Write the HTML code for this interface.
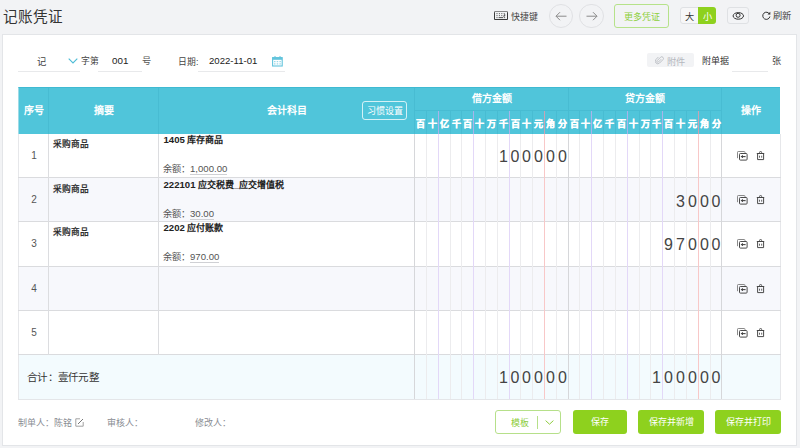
<!DOCTYPE html><html lang="zh-CN"><head><meta charset="utf-8"><style>
:root{--grid:#ececee;--pur:#e3d8f8;--red:#f8c8c8;--hgrid:#48bcd2;--cyan:#50c5da;--green:#8ed11e;}
*{box-sizing:border-box;margin:0;padding:0}
html,body{width:800px;height:448px;overflow:hidden;background:#f2f3f5;font-family:"Liberation Sans",sans-serif;color:#333}
.a{position:absolute;white-space:nowrap}
.card{position:absolute;left:2px;top:34px;width:795px;height:412px;background:#fff;border:1px solid #e3e5e8}
.vl{position:absolute;width:1px}
.hl{position:absolute;height:1px}
.hd{color:#fff;font-weight:bold;font-size:10px;line-height:12px;text-align:center}
.dg{color:#fff;font-weight:bold;font-size:9px;line-height:12px;text-align:center;-webkit-text-stroke:0.3px #fff}
.amt{position:absolute;font-size:16px;line-height:16px;color:#444;text-align:center;display:flex;justify-content:center}
.btn{position:absolute;top:410px;height:24px;border-radius:3px;background:var(--green);color:#fff;font-size:9px;line-height:25.5px;text-align:center}
</style></head><body>

<div class="a" style="left:3px;top:7.5px;font-size:14.6px;line-height:18px;color:#333">记账凭证</div>
<svg class="a" style="left:494px;top:11px" width="14" height="10" viewBox="0 0 14 10"><path d="M0.5 8.5V1.3A0.8 0.8 0 0 1 1.3 0.5H12.7A0.8 0.8 0 0 1 13.5 1.3V8.5Z" fill="none" stroke="#3a3a3a" stroke-width="1"/><path d="M1 0.5H13" stroke="#888" stroke-width="1"/><g fill="#555"><rect x="2.50" y="2.10" width="1" height="1"/><rect x="4.90" y="2.10" width="1" height="1"/><rect x="7.30" y="2.10" width="1" height="1"/><rect x="9.70" y="2.10" width="1" height="1"/><rect x="2.50" y="4.10" width="1" height="1"/><rect x="4.90" y="4.10" width="1" height="1"/><rect x="7.30" y="4.10" width="1" height="1"/><rect x="2.50" y="6.10" width="1" height="1"/><rect x="10.10" y="6.10" width="1" height="1"/><rect x="4.6" y="6.1" width="4.6" height="1"/></g><path d="M10.7 3.2V5.1H9.2" fill="none" stroke="#333" stroke-width="0.9"/></svg>
<div class="a" style="left:511px;top:10.5px;font-size:8.9px;line-height:12px;color:#444">快捷键</div>
<div class="a" style="left:548.5px;top:3.5px;width:24.5px;height:24.5px;border:1px solid #e0e1e4;border-radius:50%"></div>
<div class="a" style="left:579px;top:3.5px;width:24.5px;height:24.5px;border:1px solid #e0e1e4;border-radius:50%"></div>
<svg class="a" style="left:554px;top:10px" width="14" height="12" viewBox="0 0 14 12"><path d="M2 6.2H12.5M6 2.2L2 6.2L6 10.2" fill="none" stroke="#8a8a8a" stroke-width="1"/></svg>
<svg class="a" style="left:584.5px;top:10px" width="14" height="12" viewBox="0 0 14 12"><path d="M1.5 6.2H12M8 2.2L12 6.2L8 10.2" fill="none" stroke="#8a8a8a" stroke-width="1"/></svg>
<div class="a" style="left:614px;top:4px;width:55px;height:23.5px;border:1px solid #b6e28a;border-radius:3px;color:#8dcf3c;font-size:9px;line-height:25px;text-align:center">更多凭证</div>
<div class="a" style="left:680px;top:7px;width:36px;height:17px;border:1px solid #dfe1e4;border-radius:3px;background:#f7f7f8;"><div class="a" style="left:0;top:1.5px;width:17px;height:15px;font-size:9.2px;line-height:15px;text-align:center;color:#333">大</div></div>
<div class="a" style="left:698px;top:7px;width:18px;height:17px;background:var(--green);border-radius:0 3px 3px 0;font-size:9.2px;line-height:20px;text-align:center;color:#fff">小</div>
<div class="a" style="left:727px;top:7px;width:22px;height:17px;border:1px solid #dfe1e4;border-radius:3px;background:#f3f4f6"></div>
<svg class="a" style="left:731px;top:11px" width="15" height="10" viewBox="0 0 15 10"><ellipse cx="7.3" cy="4.9" rx="5.2" ry="3.3" fill="none" stroke="#2a2a2a" stroke-width="0.95"/><circle cx="7.1" cy="4.3" r="2" fill="none" stroke="#2a2a2a" stroke-width="0.95"/></svg>
<svg class="a" style="left:762px;top:11px" width="9" height="9" viewBox="0 0 9 9"><path d="M7.6 3.2A3.6 3.6 0 1 0 7.9 5.5" fill="none" stroke="#333" stroke-width="1"/><path d="M8.3 0.8V3.6H5.5Z" fill="#333"/></svg>
<div class="a" style="left:773px;top:10px;font-size:9.2px;line-height:12px;color:#444">刷新</div>
<div class="card"></div>
<div class="hl" style="left:18px;top:71px;width:62px;background:#e8e9eb"></div>
<div class="a" style="left:37px;top:56px;font-size:9.3px;line-height:12px;color:#444">记</div>
<svg class="a" style="left:68px;top:58px" width="10" height="6" viewBox="0 0 10 6"><path d="M0.7 0.7L5 5L9.3 0.7" fill="none" stroke="#4cbcd6" stroke-width="1.1"/></svg>
<div class="a" style="left:80.5px;top:55px;font-size:8.8px;line-height:12px;color:#444">字第</div>
<div class="hl" style="left:98px;top:71px;width:44px;background:#e8e9eb"></div>
<div class="a" style="left:112px;top:54.5px;font-size:9.8px;line-height:12px;color:#222">001</div>
<div class="a" style="left:142px;top:55px;font-size:9.2px;line-height:12px;color:#555">号</div>
<div class="a" style="left:178px;top:55.5px;font-size:8.8px;line-height:12px;color:#444">日期:</div>
<div class="hl" style="left:198px;top:71px;width:87px;background:#e8e9eb"></div>
<div class="a" style="left:209px;top:54.5px;font-size:9.6px;line-height:12px;color:#222">2022-11-01</div>
<svg class="a" style="left:272px;top:55.5px" width="11" height="11" viewBox="0 0 11 11"><rect x="0.6" y="1.6" width="9.6" height="8.4" fill="none" stroke="#62c4dc" stroke-width="1.1"/><rect x="0.6" y="1.6" width="9.6" height="2.2" fill="#62c4dc"/><path d="M3 0V2M8 0V2" stroke="#62c4dc" stroke-width="1"/><g fill="#9ad8e8"><rect x="2" y="5" width="1.5" height="1.2"/><rect x="4.7" y="5" width="1.5" height="1.2"/><rect x="7.4" y="5" width="1.5" height="1.2"/><rect x="2" y="7.3" width="1.5" height="1.2"/><rect x="4.7" y="7.3" width="1.5" height="1.2"/><rect x="7.4" y="7.3" width="1.5" height="1.2"/></g></svg>
<div class="a" style="left:647px;top:53px;width:47px;height:14px;background:#f2f3f5;border-radius:2px"></div>
<svg class="a" style="left:655px;top:55.5px" width="10" height="9" viewBox="0 0 10 9"><path d="M6.2 3.2L3.4 6A0.9 0.9 0 0 1 2.1 4.7L5.6 1.2A1.7 1.7 0 0 1 8 3.6L4.6 7A2.5 2.5 0 0 1 1 3.4L3.4 1" fill="none" stroke="#b9bcc2" stroke-width="0.9"/></svg>
<div class="a" style="left:667px;top:55.5px;font-size:9.2px;line-height:12px;color:#b5b8be">附件</div>
<div class="a" style="left:701.5px;top:55px;font-size:9px;line-height:12px;color:#333">附单据</div>
<div class="hl" style="left:732px;top:71px;width:36px;background:#e8e9eb"></div>
<div class="a" style="left:772px;top:55px;font-size:9.2px;line-height:12px;color:#444">张</div>
<div class="a" style="left:18px;top:87px;width:762px;height:47px;background:var(--cyan);border-top:1px solid #3fbad2;border-left:1px solid #9ddbe7"></div>
<div class="a" style="left:18px;top:134px;width:763px;height:266px;background:#fff;border-left:1px solid #e6e7ea;border-right:1px solid #e6e7ea"></div>
<div class="hl" style="left:18px;top:177px;width:763px;background:#dadbde"></div>
<div class="a" style="left:19px;top:178px;width:761px;height:43px;background:#f7f8fc"></div>
<div class="hl" style="left:18px;top:221px;width:763px;background:#dadbde"></div>
<div class="hl" style="left:18px;top:266px;width:763px;background:#dadbde"></div>
<div class="a" style="left:19px;top:267px;width:761px;height:43px;background:#f7f8fc"></div>
<div class="hl" style="left:18px;top:310px;width:763px;background:#dadbde"></div>
<div class="hl" style="left:18px;top:354px;width:763px;background:#dadbde"></div>
<div class="a" style="left:19px;top:355px;width:761px;height:44px;background:#f3fbfe"></div>
<div class="hl" style="left:18px;top:399px;width:763px;background:#e4e6e9"></div>
<div class="vl" style="left:48px;top:88px;height:46px;background:var(--hgrid)"></div>
<div class="vl" style="left:158px;top:88px;height:46px;background:var(--hgrid)"></div>
<div class="vl" style="left:414px;top:88px;height:46px;background:var(--hgrid)"></div>
<div class="vl" style="left:568px;top:88px;height:46px;background:var(--hgrid)"></div>
<div class="vl" style="left:721px;top:88px;height:46px;background:var(--hgrid)"></div>
<div class="hl" style="left:414px;top:110px;width:307px;background:var(--hgrid)"></div>
<div class="vl" style="left:426px;top:111px;height:23px;background:var(--hgrid)"></div>
<div class="vl" style="left:579px;top:111px;height:23px;background:var(--hgrid)"></div>
<div class="vl" style="left:438px;top:111px;height:23px;background:#a9b3ea"></div>
<div class="vl" style="left:591px;top:111px;height:23px;background:#a9b3ea"></div>
<div class="vl" style="left:450px;top:111px;height:23px;background:var(--hgrid)"></div>
<div class="vl" style="left:603px;top:111px;height:23px;background:var(--hgrid)"></div>
<div class="vl" style="left:461px;top:111px;height:23px;background:var(--hgrid)"></div>
<div class="vl" style="left:615px;top:111px;height:23px;background:var(--hgrid)"></div>
<div class="vl" style="left:473px;top:111px;height:23px;background:#a9b3ea"></div>
<div class="vl" style="left:627px;top:111px;height:23px;background:#a9b3ea"></div>
<div class="vl" style="left:485px;top:111px;height:23px;background:var(--hgrid)"></div>
<div class="vl" style="left:639px;top:111px;height:23px;background:var(--hgrid)"></div>
<div class="vl" style="left:497px;top:111px;height:23px;background:var(--hgrid)"></div>
<div class="vl" style="left:650px;top:111px;height:23px;background:var(--hgrid)"></div>
<div class="vl" style="left:509px;top:111px;height:23px;background:#a9b3ea"></div>
<div class="vl" style="left:662px;top:111px;height:23px;background:#a9b3ea"></div>
<div class="vl" style="left:520px;top:111px;height:23px;background:var(--hgrid)"></div>
<div class="vl" style="left:674px;top:111px;height:23px;background:var(--hgrid)"></div>
<div class="vl" style="left:532px;top:111px;height:23px;background:var(--hgrid)"></div>
<div class="vl" style="left:686px;top:111px;height:23px;background:var(--hgrid)"></div>
<div class="vl" style="left:544px;top:111px;height:23px;background:#c9a3b4"></div>
<div class="vl" style="left:698px;top:111px;height:23px;background:#c9a3b4"></div>
<div class="vl" style="left:556px;top:111px;height:23px;background:var(--hgrid)"></div>
<div class="vl" style="left:710px;top:111px;height:23px;background:var(--hgrid)"></div>
<div class="a hd" style="left:18px;top:104.5px;width:31px">序号</div>
<div class="a hd" style="left:48px;top:104.5px;width:111px">摘要</div>
<div class="a hd" style="left:158px;top:104.5px;width:257px">会计科目</div>
<div class="a hd" style="left:414px;top:93px;width:155px">借方金额</div>
<div class="a hd" style="left:568px;top:93px;width:154px">贷方金额</div>
<div class="a hd" style="left:721px;top:105px;width:59px">操作</div>
<div class="a" style="left:362px;top:101px;width:45px;height:19px;border:1px solid rgba(255,255,255,0.75);border-radius:3px;color:#fff;font-size:9px;line-height:19px;text-align:center">习惯设置</div>
<div class="a dg" style="left:414.50px;top:117.5px;width:12.00px">百</div>
<div class="a dg" style="left:568.50px;top:117.5px;width:11.00px">百</div>
<div class="a dg" style="left:426.50px;top:117.5px;width:12.00px">十</div>
<div class="a dg" style="left:579.50px;top:117.5px;width:12.00px">十</div>
<div class="a dg" style="left:438.50px;top:117.5px;width:12.00px">亿</div>
<div class="a dg" style="left:591.50px;top:117.5px;width:12.00px">亿</div>
<div class="a dg" style="left:450.50px;top:117.5px;width:11.00px">千</div>
<div class="a dg" style="left:603.50px;top:117.5px;width:12.00px">千</div>
<div class="a dg" style="left:461.50px;top:117.5px;width:12.00px">百</div>
<div class="a dg" style="left:615.50px;top:117.5px;width:12.00px">百</div>
<div class="a dg" style="left:473.50px;top:117.5px;width:12.00px">十</div>
<div class="a dg" style="left:627.50px;top:117.5px;width:12.00px">十</div>
<div class="a dg" style="left:485.50px;top:117.5px;width:12.00px">万</div>
<div class="a dg" style="left:639.50px;top:117.5px;width:11.00px">万</div>
<div class="a dg" style="left:497.50px;top:117.5px;width:12.00px">千</div>
<div class="a dg" style="left:650.50px;top:117.5px;width:12.00px">千</div>
<div class="a dg" style="left:509.50px;top:117.5px;width:11.00px">百</div>
<div class="a dg" style="left:662.50px;top:117.5px;width:12.00px">百</div>
<div class="a dg" style="left:520.50px;top:117.5px;width:12.00px">十</div>
<div class="a dg" style="left:674.50px;top:117.5px;width:12.00px">十</div>
<div class="a dg" style="left:532.50px;top:117.5px;width:12.00px">元</div>
<div class="a dg" style="left:686.50px;top:117.5px;width:12.00px">元</div>
<div class="a dg" style="left:544.50px;top:117.5px;width:12.00px">角</div>
<div class="a dg" style="left:698.50px;top:117.5px;width:12.00px">角</div>
<div class="a dg" style="left:556.50px;top:117.5px;width:12.00px">分</div>
<div class="a dg" style="left:710.50px;top:117.5px;width:11.00px">分</div>
<div class="vl" style="left:48px;top:134px;height:221px;background:#dcdde0"></div>
<div class="vl" style="left:158px;top:134px;height:221px;background:#dcdde0"></div>
<div class="vl" style="left:414px;top:134px;height:265px;background:#d6d7da"></div>
<div class="vl" style="left:568px;top:134px;height:265px;background:#d6d7da"></div>
<div class="vl" style="left:721px;top:134px;height:265px;background:#d6d7da"></div>
<div class="vl" style="left:426px;top:134px;height:265px;background:var(--grid)"></div>
<div class="vl" style="left:579px;top:134px;height:265px;background:var(--grid)"></div>
<div class="vl" style="left:438px;top:134px;height:265px;background:var(--pur)"></div>
<div class="vl" style="left:591px;top:134px;height:265px;background:var(--pur)"></div>
<div class="vl" style="left:450px;top:134px;height:265px;background:var(--grid)"></div>
<div class="vl" style="left:603px;top:134px;height:265px;background:var(--grid)"></div>
<div class="vl" style="left:461px;top:134px;height:265px;background:var(--grid)"></div>
<div class="vl" style="left:615px;top:134px;height:265px;background:var(--grid)"></div>
<div class="vl" style="left:473px;top:134px;height:265px;background:var(--pur)"></div>
<div class="vl" style="left:627px;top:134px;height:265px;background:var(--pur)"></div>
<div class="vl" style="left:485px;top:134px;height:265px;background:var(--grid)"></div>
<div class="vl" style="left:639px;top:134px;height:265px;background:var(--grid)"></div>
<div class="vl" style="left:497px;top:134px;height:265px;background:var(--grid)"></div>
<div class="vl" style="left:650px;top:134px;height:265px;background:var(--grid)"></div>
<div class="vl" style="left:509px;top:134px;height:265px;background:var(--pur)"></div>
<div class="vl" style="left:662px;top:134px;height:265px;background:var(--pur)"></div>
<div class="vl" style="left:520px;top:134px;height:265px;background:var(--grid)"></div>
<div class="vl" style="left:674px;top:134px;height:265px;background:var(--grid)"></div>
<div class="vl" style="left:532px;top:134px;height:265px;background:var(--grid)"></div>
<div class="vl" style="left:686px;top:134px;height:265px;background:var(--grid)"></div>
<div class="vl" style="left:544px;top:134px;height:265px;background:var(--red)"></div>
<div class="vl" style="left:698px;top:134px;height:265px;background:var(--red)"></div>
<div class="vl" style="left:556px;top:134px;height:265px;background:var(--grid)"></div>
<div class="vl" style="left:710px;top:134px;height:265px;background:var(--grid)"></div>
<div class="a" style="left:19.5px;top:149.5px;width:29px;text-align:center;font-size:10px;line-height:12px;color:#555">1</div>
<div class="a" style="left:53px;top:137.8px;font-size:8.7px;line-height:12px;color:#222;-webkit-text-stroke:0.25px #222">采购商品</div>
<div class="a" style="left:163.5px;top:134.3px;font-size:9px;line-height:12px;color:#222;font-weight:bold"><span style="font-size:9.6px">1405</span> 库存商品</div>
<div class="a" style="left:163px;top:163px;font-size:9.2px;line-height:12px;color:#555">余额：<span style="color:#555;font-size:9.6px;border-bottom:1px solid #cfd0d4;padding-bottom:0px">1,000.00</span></div>
<div class="amt" style="left:497.50px;top:149px;width:12.00px">1</div>
<div class="amt" style="left:509.50px;top:149px;width:11.00px">0</div>
<div class="amt" style="left:520.50px;top:149px;width:12.00px">0</div>
<div class="amt" style="left:532.50px;top:149px;width:12.00px">0</div>
<div class="amt" style="left:544.50px;top:149px;width:12.00px">0</div>
<div class="amt" style="left:556.50px;top:149px;width:12.00px">0</div>
<svg class="a" style="left:737px;top:151px" width="11" height="10" viewBox="0 0 11 10"><path d="M0.5 7.2V1.2A0.7 0.7 0 0 1 1.2 0.5H7.3A0.7 0.7 0 0 1 8 1.2V2" fill="none" stroke="#8a8a8a" stroke-width="1"/><rect x="2.5" y="2.5" width="7.6" height="6.6" rx="0.9" fill="none" stroke="#4a4a4a" stroke-width="1"/><path d="M3.9 5.6H8.6" stroke="#444" stroke-width="1.1"/><path d="M5.4 4.2V7" stroke="#444" stroke-width="1"/></svg>
<svg class="a" style="left:756px;top:151px" width="9" height="10" viewBox="0 0 9 10"><path d="M3.6 2.3V1.4A1 1 0 0 1 5.6 1.4V2.3" fill="none" stroke="#555" stroke-width="1"/><path d="M0.8 2.5H8.2" stroke="#444" stroke-width="1"/><path d="M1.6 2.5V8.6H7.6V2.5" fill="none" stroke="#4a4a4a" stroke-width="1"/><path d="M3.5 4.7V6.7M5.7 4.7V6.7" stroke="#555" stroke-width="0.9"/></svg>
<div class="a" style="left:19.5px;top:194.3px;width:29px;text-align:center;font-size:10px;line-height:12px;color:#555">2</div>
<div class="a" style="left:53px;top:182.60000000000002px;font-size:8.7px;line-height:12px;color:#222;-webkit-text-stroke:0.25px #222">采购商品</div>
<div class="a" style="left:163.5px;top:179.10000000000002px;font-size:9px;line-height:12px;color:#222;font-weight:bold"><span style="font-size:9.6px">222101</span> 应交税费_应交增值税</div>
<div class="a" style="left:163px;top:207.8px;font-size:9.2px;line-height:12px;color:#555">余额：<span style="color:#555;font-size:9.6px;border-bottom:1px solid #cfd0d4;padding-bottom:0px">30.00</span></div>
<div class="amt" style="left:674.50px;top:193.8px;width:12.00px">3</div>
<div class="amt" style="left:686.50px;top:193.8px;width:12.00px">0</div>
<div class="amt" style="left:698.50px;top:193.8px;width:12.00px">0</div>
<div class="amt" style="left:710.50px;top:193.8px;width:11.00px">0</div>
<svg class="a" style="left:737px;top:195px" width="11" height="10" viewBox="0 0 11 10"><path d="M0.5 7.2V1.2A0.7 0.7 0 0 1 1.2 0.5H7.3A0.7 0.7 0 0 1 8 1.2V2" fill="none" stroke="#8a8a8a" stroke-width="1"/><rect x="2.5" y="2.5" width="7.6" height="6.6" rx="0.9" fill="none" stroke="#4a4a4a" stroke-width="1"/><path d="M3.9 5.6H8.6" stroke="#444" stroke-width="1.1"/><path d="M5.4 4.2V7" stroke="#444" stroke-width="1"/></svg>
<svg class="a" style="left:756px;top:195px" width="9" height="10" viewBox="0 0 9 10"><path d="M3.6 2.3V1.4A1 1 0 0 1 5.6 1.4V2.3" fill="none" stroke="#555" stroke-width="1"/><path d="M0.8 2.5H8.2" stroke="#444" stroke-width="1"/><path d="M1.6 2.5V8.6H7.6V2.5" fill="none" stroke="#4a4a4a" stroke-width="1"/><path d="M3.5 4.7V6.7M5.7 4.7V6.7" stroke="#555" stroke-width="0.9"/></svg>
<div class="a" style="left:19.5px;top:237.5px;width:29px;text-align:center;font-size:10px;line-height:12px;color:#555">3</div>
<div class="a" style="left:53px;top:225.8px;font-size:8.7px;line-height:12px;color:#222;-webkit-text-stroke:0.25px #222">采购商品</div>
<div class="a" style="left:163.5px;top:222.3px;font-size:9px;line-height:12px;color:#222;font-weight:bold"><span style="font-size:9.6px">2202</span> 应付账款</div>
<div class="a" style="left:163px;top:251px;font-size:9.2px;line-height:12px;color:#555">余额：<span style="color:#555;font-size:9.6px;border-bottom:1px solid #cfd0d4;padding-bottom:0px">970.00</span></div>
<div class="amt" style="left:662.50px;top:237px;width:12.00px">9</div>
<div class="amt" style="left:674.50px;top:237px;width:12.00px">7</div>
<div class="amt" style="left:686.50px;top:237px;width:12.00px">0</div>
<div class="amt" style="left:698.50px;top:237px;width:12.00px">0</div>
<div class="amt" style="left:710.50px;top:237px;width:11.00px">0</div>
<svg class="a" style="left:737px;top:239px" width="11" height="10" viewBox="0 0 11 10"><path d="M0.5 7.2V1.2A0.7 0.7 0 0 1 1.2 0.5H7.3A0.7 0.7 0 0 1 8 1.2V2" fill="none" stroke="#8a8a8a" stroke-width="1"/><rect x="2.5" y="2.5" width="7.6" height="6.6" rx="0.9" fill="none" stroke="#4a4a4a" stroke-width="1"/><path d="M3.9 5.6H8.6" stroke="#444" stroke-width="1.1"/><path d="M5.4 4.2V7" stroke="#444" stroke-width="1"/></svg>
<svg class="a" style="left:756px;top:239px" width="9" height="10" viewBox="0 0 9 10"><path d="M3.6 2.3V1.4A1 1 0 0 1 5.6 1.4V2.3" fill="none" stroke="#555" stroke-width="1"/><path d="M0.8 2.5H8.2" stroke="#444" stroke-width="1"/><path d="M1.6 2.5V8.6H7.6V2.5" fill="none" stroke="#4a4a4a" stroke-width="1"/><path d="M3.5 4.7V6.7M5.7 4.7V6.7" stroke="#555" stroke-width="0.9"/></svg>
<div class="a" style="left:19.5px;top:282.5px;width:29px;text-align:center;font-size:10px;line-height:12px;color:#555">4</div>
<svg class="a" style="left:737px;top:284px" width="11" height="10" viewBox="0 0 11 10"><path d="M0.5 7.2V1.2A0.7 0.7 0 0 1 1.2 0.5H7.3A0.7 0.7 0 0 1 8 1.2V2" fill="none" stroke="#8a8a8a" stroke-width="1"/><rect x="2.5" y="2.5" width="7.6" height="6.6" rx="0.9" fill="none" stroke="#4a4a4a" stroke-width="1"/><path d="M3.9 5.6H8.6" stroke="#444" stroke-width="1.1"/><path d="M5.4 4.2V7" stroke="#444" stroke-width="1"/></svg>
<svg class="a" style="left:756px;top:284px" width="9" height="10" viewBox="0 0 9 10"><path d="M3.6 2.3V1.4A1 1 0 0 1 5.6 1.4V2.3" fill="none" stroke="#555" stroke-width="1"/><path d="M0.8 2.5H8.2" stroke="#444" stroke-width="1"/><path d="M1.6 2.5V8.6H7.6V2.5" fill="none" stroke="#4a4a4a" stroke-width="1"/><path d="M3.5 4.7V6.7M5.7 4.7V6.7" stroke="#555" stroke-width="0.9"/></svg>
<div class="a" style="left:19.5px;top:326.5px;width:29px;text-align:center;font-size:10px;line-height:12px;color:#555">5</div>
<svg class="a" style="left:737px;top:328px" width="11" height="10" viewBox="0 0 11 10"><path d="M0.5 7.2V1.2A0.7 0.7 0 0 1 1.2 0.5H7.3A0.7 0.7 0 0 1 8 1.2V2" fill="none" stroke="#8a8a8a" stroke-width="1"/><rect x="2.5" y="2.5" width="7.6" height="6.6" rx="0.9" fill="none" stroke="#4a4a4a" stroke-width="1"/><path d="M3.9 5.6H8.6" stroke="#444" stroke-width="1.1"/><path d="M5.4 4.2V7" stroke="#444" stroke-width="1"/></svg>
<svg class="a" style="left:756px;top:328px" width="9" height="10" viewBox="0 0 9 10"><path d="M3.6 2.3V1.4A1 1 0 0 1 5.6 1.4V2.3" fill="none" stroke="#555" stroke-width="1"/><path d="M0.8 2.5H8.2" stroke="#444" stroke-width="1"/><path d="M1.6 2.5V8.6H7.6V2.5" fill="none" stroke="#4a4a4a" stroke-width="1"/><path d="M3.5 4.7V6.7M5.7 4.7V6.7" stroke="#555" stroke-width="0.9"/></svg>
<div class="a" style="left:27px;top:371.3px;font-size:10.5px;letter-spacing:0.3px;line-height:13px;color:#333">合计：壹仟元整</div>
<div class="amt" style="left:497.50px;top:370px;width:12.00px">1</div>
<div class="amt" style="left:509.50px;top:370px;width:11.00px">0</div>
<div class="amt" style="left:520.50px;top:370px;width:12.00px">0</div>
<div class="amt" style="left:532.50px;top:370px;width:12.00px">0</div>
<div class="amt" style="left:544.50px;top:370px;width:12.00px">0</div>
<div class="amt" style="left:556.50px;top:370px;width:12.00px">0</div>
<div class="amt" style="left:650.50px;top:370px;width:12.00px">1</div>
<div class="amt" style="left:662.50px;top:370px;width:12.00px">0</div>
<div class="amt" style="left:674.50px;top:370px;width:12.00px">0</div>
<div class="amt" style="left:686.50px;top:370px;width:12.00px">0</div>
<div class="amt" style="left:698.50px;top:370px;width:12.00px">0</div>
<div class="amt" style="left:710.50px;top:370px;width:11.00px">0</div>
<div class="a" style="left:18px;top:417px;font-size:9px;line-height:12px;color:#8a8d93">制单人：陈铭</div>
<svg class="a" style="left:75px;top:418px" width="9" height="9" viewBox="0 0 9 9"><path d="M5 0.8H0.8V8.2H8.2V4" fill="none" stroke="#999" stroke-width="0.9"/><path d="M3 6L8 1" stroke="#777" stroke-width="1"/></svg>
<div class="a" style="left:107px;top:417px;font-size:9px;line-height:12px;color:#8a8d93">审核人：</div>
<div class="a" style="left:194.5px;top:417px;font-size:9px;line-height:12px;color:#8a8d93">修改人：</div>
<div class="a" style="left:495px;top:410px;width:66px;height:24px;border:1px solid #b6e08a;border-radius:3px;background:#fff"></div>
<div class="a" style="left:511px;top:417px;font-size:9px;line-height:12px;color:#8dcc3c">模板</div>
<div class="vl" style="left:537px;top:416px;height:13px;background:#b6e08a"></div>
<svg class="a" style="left:544.5px;top:419.5px" width="9" height="5" viewBox="0 0 9 5"><path d="M0.6 0.6L4.5 4.2L8.4 0.6" fill="none" stroke="#8dcc3c" stroke-width="1"/></svg>
<div class="btn" style="left:572.5px;width:54px">保存</div>
<div class="btn" style="left:638px;width:66px">保存并新增</div>
<div class="btn" style="left:715px;width:66px">保存并打印</div>
</body></html>
